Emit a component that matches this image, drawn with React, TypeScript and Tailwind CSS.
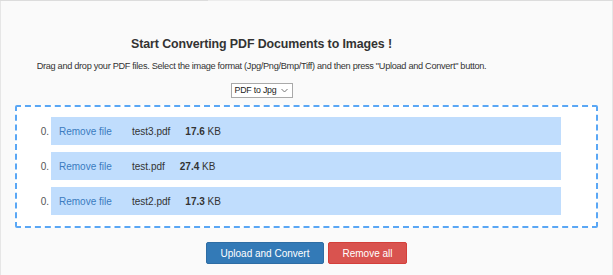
import React from "react";

const files = [
  { name: "test3.pdf", size: "17.6" },
  { name: "test.pdf", size: "27.4" },
  { name: "test2.pdf", size: "17.3" },
];

export default function App() {
  return (
    <div
      className="w-[613px] h-[275px] bg-[#fafafa] overflow-hidden flex flex-col"
      style={{ fontFamily: '"Liberation Sans", Arial, sans-serif' }}
    >
      <div className="flex h-px shrink-0">
        <div className="w-[208px] bg-[#dcdcdc]" />
        <div className="w-[52px] bg-[#ececec]" />
        <div className="flex-1 bg-[#dcdcdc]" />
      </div>
      <div className="flex-1 border-l border-r border-[#e6e6e6] flex flex-col items-center">
        <div className="self-start w-[521px] flex flex-col items-center">
          <h1 className="mt-[35px] text-[12.4px] leading-[16px] font-bold text-[#333] tracking-[-0.1px]">
            Start Converting PDF Documents to Images !
          </h1>
          <p className="mt-[8px] text-[9.2px] leading-[12px] text-[#333] whitespace-nowrap tracking-[-0.3px]">
            Drag and drop your PDF files. Select the image format (Jpg/Png/Bmp/Tiff) and then press "Upload and Convert" button.
          </p>
          <div className="mt-[11px] w-[62px] h-[15px] border border-[#a9a9a9] bg-white flex items-center justify-between pl-[3px] pr-[4px] text-[8.8px] tracking-[-0.2px] text-[#222] whitespace-nowrap">
            <span>PDF to Jpg</span>
            <svg width="7" height="5" viewBox="0 0 7 5" fill="none">
              <path d="M0.5 1 L3.5 4 L6.5 1" stroke="#777" strokeWidth="1" />
            </svg>
          </div>
        </div>
        <div className="mt-[7px] w-[583px] h-[123px] border-2 border-dashed border-[#5aa7f5] bg-white rounded-[2px] pt-[10px] flex flex-col gap-[7px]">
          {files.map((f) => (
            <div key={f.name} className="flex items-center h-[28px]">
              <div className="w-[34px] text-right pr-[2px] text-[10px] text-[#555]">0.</div>
              <div className="w-[510px] h-[28px] bg-[#c0ddfd] flex items-center pl-[8px] text-[10px]">
                <span className="text-[#3a7bc0] w-[73px]">Remove file</span>
                <span className="text-[#333]">{f.name}</span>
                <span className="ml-[15px] text-[#333]">
                  <b>{f.size}</b> KB
                </span>
              </div>
            </div>
          ))}
        </div>
        <div className="mt-[14px] flex gap-[4px]">
          <button className="w-[118px] h-[22px] bg-[#337ab7] border border-[#2e6da4] rounded-[2px] text-white text-[10px]">
            Upload and Convert
          </button>
          <button className="w-[79px] h-[22px] bg-[#d9534f] border border-[#d43f3a] rounded-[2px] text-white text-[10px]">
            Remove all
          </button>
        </div>
      </div>
    </div>
  );
}
